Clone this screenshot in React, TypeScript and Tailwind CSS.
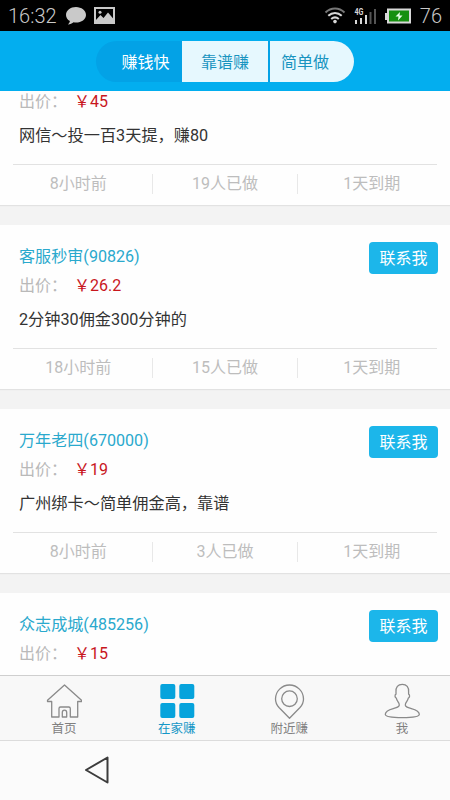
import clsx from "clsx";
import type { ReactNode } from "react";

type Task = {
  id: number;
  name?: string;
  price: string;
  title?: string;
  posted?: string;
  done?: string;
  expires?: string;
};

const tasks: Task[] = [
  { id: 1, price: "45", title: "网信～投一百3天提，赚80", posted: "8小时前", done: "19人已做", expires: "1天到期" },
  { id: 2, name: "客服秒审(90826)", price: "26.2", title: "2分钟30佣金300分钟的", posted: "18小时前", done: "15人已做", expires: "1天到期" },
  { id: 3, name: "万年老四(670000)", price: "19", title: "广州绑卡～简单佣金高，靠谱", posted: "8小时前", done: "3人已做", expires: "1天到期" },
  { id: 4, name: "众志成城(485256)", price: "15" },
];

function StatusBar() {
  return (
    <div className="flex h-[31px] shrink-0 items-center bg-black px-[8px] text-[#c9c9c9]">
      <span className="w-[49px] text-[20px] leading-none font-light">16:32</span>
      <svg className="ml-[8px] h-[20px] w-[22px]" viewBox="0 0 22 20" fill="#c9c9c9">
        <path d="M11 1C5.500 1 1 4.300 1 8.900c0 2.600 1.500 4.800 3.900 6.200-.2 1.400-1 2.600-2 3.400 2.400 0 4.300-1 5.700-2.200.8.100 1.600.200 2.400.200 5.500 0 10-3.300 10-7.600S16.500 1 11 1z" />
      </svg>
      <svg className="ml-[7px] h-[17px] w-[21px]" viewBox="0 0 21 17">
        <rect x="1" y="1" width="19" height="15" fill="none" stroke="#c9c9c9" strokeWidth="2" />
        <path d="M1 14l5.500-6 3 3L14 5.500l6 7V16H1z" fill="#c9c9c9" />
        <circle cx="6" cy="5.200" r="1.500" fill="#c9c9c9" />
      </svg>
      <svg className="ml-auto h-[17px] w-[22px]" viewBox="0 0 22 17" fill="none">
        <path d="M1.500 5.500C7 .2 15 .2 20.500 5.500" stroke="#777" strokeWidth="2" />
        <path d="M4.300 8.800c4-3.700 9.400-3.700 13.400 0" stroke="#d8d8d8" strokeWidth="2" />
        <path d="M7.200 12c2.300-2 5.300-2 7.600 0" stroke="#d8d8d8" strokeWidth="2" />
        <circle cx="11" cy="14.600" r="1.800" fill="#d8d8d8" />
      </svg>
      <svg className="ml-[8px] h-[18px] w-[24px]" viewBox="0 0 24 18">
        <text x="0.500" y="8" fontSize="9" fontWeight="700" textLength="9" lengthAdjust="spacingAndGlyphs" fill="#d8d8d8">4G</text>
        <rect x="1" y="13" width="2" height="4" fill="#d8d8d8" />
        <rect x="6" y="11" width="2" height="6" fill="#d8d8d8" />
        <rect x="11" y="8" width="2" height="9" fill="#d8d8d8" />
        <rect x="15.500" y="5" width="2" height="12" fill="#555" />
        <rect x="20" y="2" width="2" height="15" fill="#555" />
      </svg>
      <svg className="ml-[6px] h-[16px] w-[28px]" viewBox="0 0 28 16">
        <rect x="1" y="5" width="2" height="7" fill="#d8d8d8" />
        <rect x="4" y="1.500" width="22" height="13" fill="#16900f" stroke="#d8d8d8" strokeWidth="2" />
        <path d="M16 4l-4.500 4.500h3L14 12.500l4.500-5h-3z" fill="#e8ffe8" />
      </svg>
      <span className="ml-[8px] text-[20px] leading-none font-light">76</span>
    </div>
  );
}

function SegmentedHeader() {
  return (
    <header className="flex h-[60px] shrink-0 justify-center bg-[#03aeef] pt-[10px] text-[16px]">
      <div className="flex h-[41px] w-[258px] overflow-hidden rounded-full bg-[#03a2e6] text-[#1894c0]">
        <button type="button" className="w-[86px] pt-[2px] pl-[13px] text-white">赚钱快</button>
        <button type="button" className="w-[86px] bg-[#e6f8fe] pt-[2px]">靠谱赚</button>
        <button type="button" className="w-[86px] border-l-2 border-[#03a2e6] bg-[#e6f8fe] pt-[2px] pr-[14px]">简单做</button>
      </div>
    </header>
  );
}

function TaskCard({ task }: { task: Task }) {
  return (
    <article className="relative h-[164px] shrink-0 bg-[#fefefe] pt-[18px] text-[16px] shadow-[0_1px_1px_#e2e2e2]">
      <div className="px-[19px]">
        <h2 className="h-[28px] text-[16.1px] leading-[28px] text-[#2aa9cd]">{task.name}</h2>
        <p className="flex h-[30px] leading-[29px] text-[#b9b9b9]">
          出价：<span className="ml-[7px] text-[#c8161d]">￥{task.price}</span>
        </p>
        <p className="h-[38px] text-[16.2px] leading-[38px] text-[#333]">{task.title}</p>
      </div>
      {task.name ? (
        <button type="button" className="absolute top-[17px] right-[12px] h-[32px] w-[69px] rounded-[4px] bg-[#1cb6ea] pt-[2px] text-white">
          联系我
        </button>
      ) : null}
      <div className="mx-[13px] mt-[9px] h-px bg-[#e2e2e2]" />
      <div className="mx-[5px] flex h-[37px] items-center text-center leading-[20px] text-[#bdbdbd]">
        <span className="h-[20px] w-[147px]">{task.posted}</span>
        <span className="h-[20px] w-[147px] border-x border-[#e8e8e8]">{task.done}</span>
        <span className="h-[20px] w-[147px]">{task.expires}</span>
      </div>
    </article>
  );
}

function Tab({ label, active, children }: { label: string; active?: boolean; children: ReactNode }) {
  return (
    <button
      type="button"
      className={clsx("flex w-[40px] flex-col items-center text-[12.5px] leading-[16px]", active ? "text-[#1596c6]" : "text-[#808080]")}
    >
      <svg className="h-[36px] w-[36px]" viewBox="0 0 36 36" fill="none" stroke="#8a8a8a" strokeWidth="1.300" strokeLinejoin="round">
        {children}
      </svg>
      <span className="mt-[2px] whitespace-nowrap">{label}</span>
    </button>
  );
}

function TabBar() {
  return (
    <nav className="flex h-[65px] shrink-0 justify-between border-t border-[#cfcfcf] bg-[#f8f8f8] pt-[7px] pr-[28px] pl-[44px]">
      <Tab label="首页">
        <path d="M18.500 2L1.500 17.300v1.200h4.200V34H13V25.500q0-1.500 1.500-1.500h8.300q1.500 0 1.500 1.500V34h7.400V18.500h3.800v-1.200z" />
        <path d="M16.300 34v-4.500q0-2.300 2.200-2.300t2.200 2.300V34z" />
      </Tab>
      <Tab label="在家赚" active>
        <g fill="#06a3dc" stroke="none">
          <rect x="1.300" y="1" width="15" height="15" rx="2" />
          <rect x="20.300" y="1" width="15" height="15" rx="2" />
          <rect x="1.300" y="20" width="15" height="15" rx="2" />
          <rect x="20.300" y="20" width="15" height="15" rx="2" />
        </g>
      </Tab>
      <Tab label="附近赚">
        <path d="M18.500 35.200L8 24.500C5.500 21.800 4.500 19 4.500 16a14 14 0 0 1 28 0c0 3-1 5.800-3.500 8.500z" />
        <circle cx="18.500" cy="15.700" r="7.800" />
      </Tab>
      <Tab label="我">
        <path d="M18.300 1.300c-4.500 0-6.600 3-6.300 7.500v2.400c-1.400.6-1.300 3.300.3 4 .5 2.500 1.700 3.300 2.700 5.300 1 2.500-.5 3.500-3.500 4.400C7.500 26.200 1.300 27 1.300 31.300c0 2.700 6 3.400 17 3.400s17-.7 17-3.400c0-4.300-6.200-5.100-10.200-6.400-3-.9-4.500-1.900-3.500-4.400 1-2 2.200-2.800 2.700-5.300 1.600-.7 1.700-3.400.3-4V8.800c.3-4.500-1.800-7.500-6.300-7.500z" />
      </Tab>
    </nav>
  );
}

export default function App() {
  return (
    <div className="flex h-[800px] w-[450px] flex-col overflow-hidden bg-[#fbfbfb] font-['Roboto','Noto_Sans_CJK_SC',sans-serif]">
      <StatusBar />
      <SegmentedHeader />
      <main className="min-h-0 flex-1 overflow-hidden bg-[#f3f3f3]">
        {/* list is scrolled partway into the first card */}
        <div className="-mt-[50px] flex flex-col gap-[20px]">
          {tasks.map((task) => (
            <TaskCard key={task.id} task={task} />
          ))}
        </div>
      </main>
      <TabBar />
      <div className="h-[60px] shrink-0 border-t border-[#dcdcdc] bg-[#fbfbfb] pt-[15px] pl-[84px]">
        <svg className="h-[28px] w-[26px]" viewBox="0 0 26 28" fill="none" stroke="#3c3c3c" strokeWidth="2" strokeLinejoin="round">
          <path d="M23.500 1.500v25L2 14z" />
        </svg>
      </div>
    </div>
  );
}
